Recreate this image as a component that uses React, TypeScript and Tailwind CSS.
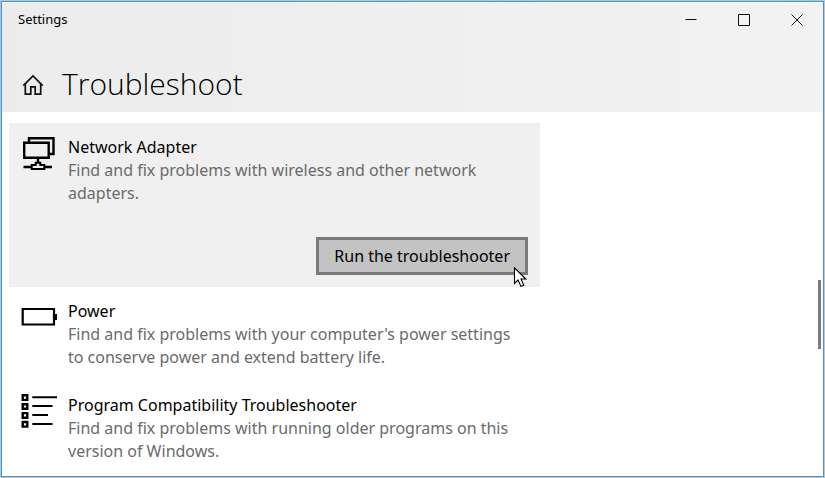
import React, { useState } from 'react';

interface Troubleshooter {
  id: string;
  name: string;
  description: string;
  icon: React.ReactNode;
}

function HomeIcon() {
  return (
    <svg className="w-6 h-6" viewBox="0 0 24 24" fill="none" stroke="#111" strokeWidth="1.7">
      <path d="M1.3 13.6 11 4l9.7 9.6" />
      <path d="M3.3 12V22.2H8.8V14.8H13.2V22.2H18.7V12" />
    </svg>
  );
}

function NetworkIcon() {
  return (
    <svg className="w-9 h-9" viewBox="0 0 36 36" fill="none" stroke="#000" strokeWidth="2.4">
      <path d="M8 7.5V3.2H32.5V19H28" />
      <path d="M3.2 7.7H27.7V22.8H3.2Z" />
      <path d="M17 22.8V28M2.5 32H10M24 32H31" />
      <path d="M10.7 34V30H14.7V27.7H19.3V30H23.3V34Z" strokeWidth="2" />
    </svg>
  );
}

function BatteryIcon() {
  return (
    <svg className="w-9 h-9" viewBox="0 0 36 36" fill="none" stroke="#000" strokeWidth="2.2">
      <path d="M1.7 10H33V25.5H1.7Z" />
      <path d="M35 15V21" />
    </svg>
  );
}

function ListIcon() {
  return (
    <svg className="w-9 h-9" viewBox="0 0 36 36" fill="none" stroke="#000" strokeWidth="2.4">
      <path d="M1.7 2.3H6.3V6.9H1.7ZM1.7 11.2H6.3V15.8H1.7ZM1.7 20.1H6.3V24.7H1.7ZM1.7 29H6.3V33.6H1.7Z" />
      <path d="M11.3 4.3H36M11.3 13H31.5M11.3 22H27M11.3 31H31.5" strokeWidth="2" />
    </svg>
  );
}

function CursorIcon() {
  return (
    <svg className="absolute -right-px -bottom-3 w-4 h-5" viewBox="0 0 16 20">
      <path d="M1.5 .8V16.4L5 13L8 19.4L10.8 18.3L8 12H12.8Z" fill="#fff" stroke="#000" strokeWidth="1.1" />
    </svg>
  );
}

const troubleshooters: Troubleshooter[] = [
  {
    id: 'network',
    name: 'Network Adapter',
    description: 'Find and fix problems with wireless and other network adapters.',
    icon: <NetworkIcon />,
  },
  {
    id: 'power',
    name: 'Power',
    description: "Find and fix problems with your computer's power settings to conserve power and extend battery life.",
    icon: <BatteryIcon />,
  },
  {
    id: 'compatibility',
    name: 'Program Compatibility Troubleshooter',
    description: 'Find and fix problems with running older programs on this version of Windows.',
    icon: <ListIcon />,
  },
];

function TitleBar() {
  const buttonClass = 'w-[53px] h-[34px] flex items-center justify-center hover:bg-black/10';

  return (
    <div className="flex items-center justify-between">
      <span className="pl-4 text-[13px] text-black">Settings</span>
      <div className="flex">
        <button aria-label="Minimize" className={buttonClass}>
          <svg className="w-3 h-3" viewBox="0 0 12 12" stroke="#111">
            <path d="M.5 5.5H11.5" />
          </svg>
        </button>
        <button aria-label="Maximize" className={buttonClass}>
          <svg className="w-3 h-3" viewBox="0 0 12 12" fill="none" stroke="#111">
            <path d="M.5 .5H11.5V11.5H.5Z" />
          </svg>
        </button>
        <button aria-label="Close" className={buttonClass}>
          <svg className="w-3 h-3" viewBox="0 0 12 12" stroke="#111">
            <path d="M.5 .5 11.5 11.5M11.5 .5 .5 11.5" />
          </svg>
        </button>
      </div>
    </div>
  );
}

export default function App() {
  const [selected, setSelected] = useState('network');

  return (
    <div className="min-h-screen flex border border-[#b9c4cc] bg-white font-['Noto_Sans',sans-serif]">
      <div className="relative flex-1 border border-[#4394d8]">
        {/* Header */}
        <header className="mt-px pb-[7px] bg-linear-to-r from-[#ececec] to-[#f2f2f2]">
          <TitleBar />
          <div className="flex items-center gap-4 pt-[25px] pl-5">
            <a href="#home" aria-label="Home">
              <HomeIcon />
            </a>
            <h1 className="text-[30px] leading-[43px] font-light text-black font-['Open_Sans',sans-serif]">
              Troubleshoot
            </h1>
          </div>
        </header>

        {/* Troubleshooter list */}
        <ul className="max-w-[538px] pt-[11px] pl-[7px]">
          {troubleshooters.map((item) => (
            <li
              key={item.id}
              onClick={() => setSelected(item.id)}
              className={`px-3 py-3 ${item.id === selected ? 'bg-[#f0f0f0]' : ''}`}
            >
              <div className="flex gap-[11px]">
                <div className="shrink-0">{item.icon}</div>
                <div className="pt-px text-base leading-[23px]">
                  <h2 className="text-black">{item.name}</h2>
                  <p className="text-[#6b6b6b]">{item.description}</p>
                </div>
              </div>
              {item.id === selected && (
                <div className="flex justify-end pt-8">
                  <div className="relative">
                    <button className="h-[38px] px-[15px] border-3 border-[#7a7a7a] bg-[#c3c3c3] text-base leading-[23px] text-black">
                      Run the troubleshooter
                    </button>
                    <CursorIcon />
                  </div>
                </div>
              )}
            </li>
          ))}
        </ul>

        {/* Scroll thumb */}
        <div className="absolute right-0.5 top-[278px] w-[3px] h-[69px] bg-[#7c7c7c]" />
      </div>
    </div>
  );
}
